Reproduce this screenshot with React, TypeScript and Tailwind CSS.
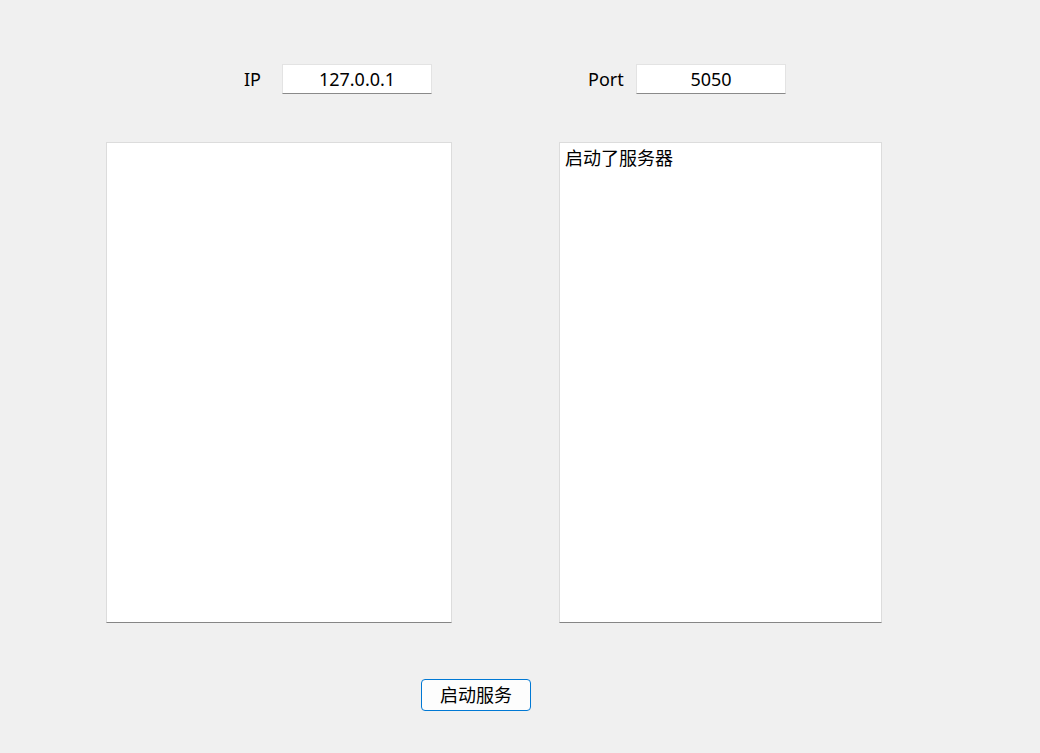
import React from 'react';

const font = { fontFamily: '"Noto Sans", "Noto Sans CJK SC", sans-serif' };

const App: React.FC = () => {
  return (
    <div className="w-[1040px] h-[753px] bg-[#f0f0f0] text-black overflow-hidden" style={font}>
      {/* top row: ip / port */}
      <div className="flex items-center pt-[64px] pl-[244px] text-[18px]">
        <span className="w-[38px] leading-[30px]">IP</span>
        <div className="w-[150px] h-[30px] bg-white border border-[#e3e3e3] border-b-[#8a8a8a] flex items-center justify-center leading-none">
          127.0.0.1
        </div>
        <span className="ml-[156px] w-[48px] leading-[30px]">Port</span>
        <div className="w-[150px] h-[30px] bg-white border border-[#e3e3e3] border-b-[#8a8a8a] flex items-center justify-center leading-none">
          5050
        </div>
      </div>

      {/* panels */}
      <div className="flex mt-[48px] pl-[106px] gap-[107px]">
        <div className="w-[346px] h-[481px] bg-white border border-[#dcdcdc] border-b-[#868686]" />
        <div className="w-[323px] h-[481px] bg-white border border-[#dcdcdc] border-b-[#868686] px-[5px] pt-[3px] text-[18px] leading-[24px]">
          启动了服务器
        </div>
      </div>

      {/* start button */}
      <div className="pl-[421px] mt-[56px]">
        <button className="w-[110px] h-[32px] bg-[#fdfdfd] border border-[#0078d4] rounded-[4px] text-[18px] leading-none flex items-center justify-center">
          启动服务
        </button>
      </div>
    </div>
  );
};

export default App;
